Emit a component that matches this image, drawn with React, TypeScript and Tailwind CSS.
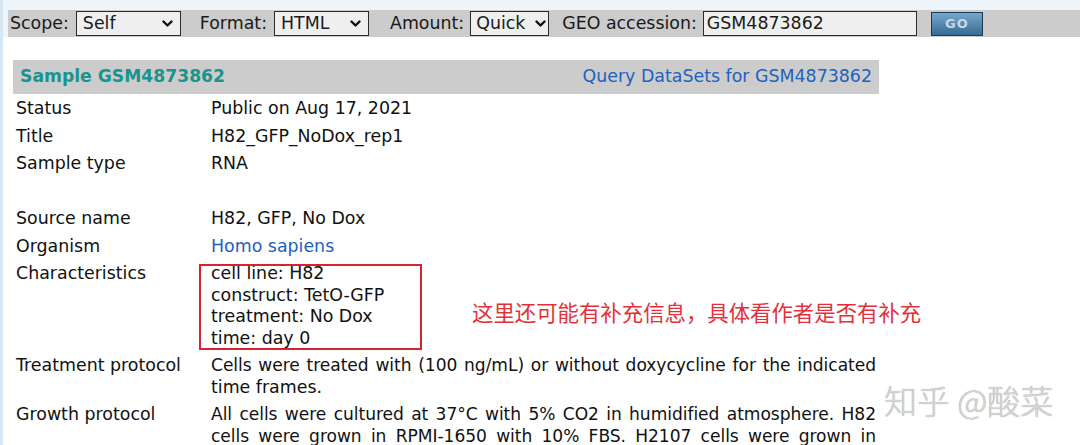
import React from "react";

const Chevron = () => (
  <svg width="11" height="8" viewBox="0 0 11 8" className="shrink-0">
    <polyline points="1.5,1.5 5.5,5.5 9.5,1.5" fill="none" stroke="#111" strokeWidth="2.4" strokeLinecap="round" strokeLinejoin="round" />
  </svg>
);

function Select({ value, w }: { value: string; w: string }) {
  return (
    <div className={`flex h-[25px] items-center justify-between border border-[#2a2a2a] bg-[#efefef] pl-[6px] pr-[7px] ${w}`}>
      <span>{value}</span>
      <Chevron />
    </div>
  );
}

function Row({ label, children }: { label: string; children: React.ReactNode }) {
  return (
    <div className="grid grid-cols-[195px_671px]">
      <div className="pb-[2px] pl-[3px] pt-[4px]">{label}</div>
      <div className="pb-[2px] pl-[3px] pt-[4px]">{children}</div>
    </div>
  );
}

const J = ({ children }: { children: React.ReactNode }) => (
  <div className="w-[665px] text-justify text-[17.1px] tracking-[-0.05px] [text-align-last:justify]">{children}</div>
);

export default function App() {
  return (
    <div className="relative h-[445px] w-[1080px] overflow-hidden bg-white font-['DejaVu_Sans','Verdana',sans-serif] text-[17.4px] leading-[21.5px] text-[#111]">
      <div className="absolute left-0 top-0 h-full w-[3px] bg-[#d6e7f3]" />
      <div className="bg-[#eef6fb] pl-[8px] pt-[10px]">
        <div className="flex h-[27px] items-center bg-[#cccccc] pl-[2px] text-[#1a1a1a]">
          <span className="mr-[7px]">Scope:</span>
          <Select value="Self" w="w-[105px]" />
          <span className="ml-[19px] mr-[7px]">Format:</span>
          <Select value="HTML" w="w-[95px]" />
          <span className="ml-[21px] mr-[6px]">Amount:</span>
          <div className="flex h-[25px] w-[79px] items-center justify-between border border-[#2a2a2a] bg-[#efefef] pl-[5px] pr-[2px]">
            <span>Quick</span>
            <Chevron />
          </div>
          <span className="ml-[13px] mr-[6px]">GEO accession:</span>
          <div className="flex h-[25px] w-[214px] items-center border border-[#2a2a2a] bg-[#efefef] pl-[3px]">
            GSM4873862
          </div>
          <div className="ml-[14px] flex h-[24px] w-[52px] items-center justify-center border border-[#1e3850] bg-gradient-to-b from-[#77a8cc] to-[#386a92] text-[13px] font-bold tracking-[1px] text-[#c6d8e8]">
            GO
          </div>
        </div>
      </div>

      <div className="pl-[13px] pt-[23px]">
        <div className="flex h-[34px] w-[866px] items-center justify-between bg-[#cccccc] pl-[7px] pr-[7px]">
          <span className="text-[17.2px] font-bold text-[#17958e]">Sample GSM4873862</span>
          <span className="text-[#1c62c0]">Query DataSets for GSM4873862</span>
        </div>

        <Row label="Status">Public on Aug 17, 2021</Row>
        <Row label="Title">H82_GFP_NoDox_rep1</Row>
        <Row label="Sample type">RNA</Row>
        <Row label="">&nbsp;</Row>
        <Row label="Source name">H82, GFP, No Dox</Row>
        <Row label="Organism">
          <span className="text-[#1c62c0]">Homo sapiens</span>
        </Row>
        <Row label="Characteristics">
          <div className="relative">
            <div>cell line: H82</div>
            <div>construct: TetO-GFP</div>
            <div>treatment: No Dox</div>
            <div>time: day 0</div>
            <div className="absolute left-[-12px] top-[1px] h-[86px] w-[223px] border-2 border-[#d8222d]" />
            <div className="absolute left-[261px] top-[38px] whitespace-nowrap font-['Noto_Sans_CJK_SC',sans-serif] text-[21.4px] text-[#e3313b]">
              这里还可能有补充信息，具体看作者是否有补充
            </div>
          </div>
        </Row>
        <Row label="Treatment protocol">
          <J>Cells were treated with (100 ng/mL) or without doxycycline for the indicated</J>
          <div>time frames.</div>
        </Row>
        <Row label="Growth protocol">
          <J>All cells were cultured at 37°C with 5% CO2 in humidified atmosphere. H82</J>
          <J>cells were grown in RPMI-1650 with 10% FBS. H2107 cells were grown in</J>
        </Row>
      </div>

      <div className="absolute left-[884px] top-[380px] whitespace-nowrap font-['Noto_Sans_CJK_SC',sans-serif] text-[33px] font-light leading-[40px] text-[#d4d4d4] [text-shadow:0_0_1px_#9a9a9a]">
        知乎 @酸菜
      </div>
    </div>
  );
}
